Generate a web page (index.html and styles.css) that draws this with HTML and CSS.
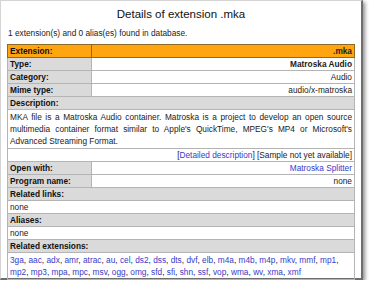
FILE: index.html
```html
<!DOCTYPE html>
<html lang="en">
  <head>
    <meta charset="utf-8" />
    <title>Details of extension .mka</title>
    <link rel="stylesheet" href="styles.css">
  </head>
  <body>
    <div class="page">
      <h1 class="title">Details of extension .mka</h1>
      <p class="found">1 extension(s) and 0 alias(es) found in database.</p>
      <table class="details">
        <tr class="head">
          <th>Extension:</th>
          <td class="val">.mka</td>
        </tr>
        <tr>
          <th>Type:</th>
          <td class="val strong">Matroska Audio</td>
        </tr>
        <tr>
          <th>Category:</th>
          <td class="val">Audio</td>
        </tr>
        <tr>
          <th>Mime type:</th>
          <td class="val">audio/x-matroska</td>
        </tr>
        <tr>
          <th colspan="2">Description:</th>
        </tr>
        <tr>
          <td colspan="2" class="text">MKA file is a Matroska Audio container. Matroska is a project to develop an open source multimedia container format similar to Apple's QuickTime, MPEG's MP4 or Microsoft's Advanced Streaming Format.</td>
        </tr>
        <tr>
          <td colspan="2" class="val">[<a href="#desc">Detailed description</a>] [Sample not yet available]</td>
        </tr>
        <tr>
          <th>Open with:</th>
          <td class="val"><a href="#splitter">Matroska Splitter</a></td>
        </tr>
        <tr>
          <th>Program name:</th>
          <td class="val">none</td>
        </tr>
        <tr>
          <th colspan="2">Related links:</th>
        </tr>
        <tr>
          <td colspan="2">none</td>
        </tr>
        <tr>
          <th colspan="2">Aliases:</th>
        </tr>
        <tr>
          <td colspan="2">none</td>
        </tr>
        <tr>
          <th colspan="2">Related extensions:</th>
        </tr>
        <tr>
          <td colspan="2" class="exts">
            <a href="#3ga">3ga</a>, <a href="#aac">aac</a>, <a href="#adx">adx</a>, <a href="#amr">amr</a>, <a href="#atrac">atrac</a>, <a href="#au">au</a>, <a href="#cel">cel</a>, <a href="#ds2">ds2</a>, <a href="#dss">dss</a>, <a href="#dts">dts</a>, <a href="#dvf">dvf</a>, <a href="#elb">elb</a>, <a href="#m4a">m4a</a>, <a href="#m4b">m4b</a>, <a href="#m4p">m4p</a>, <a href="#mkv">mkv</a>, <a href="#mmf">mmf</a>, <a href="#mp1">mp1</a>, <a href="#mp2">mp2</a>, <a href="#mp3">mp3</a>, <a href="#mpa">mpa</a>, <a href="#mpc">mpc</a>, <a href="#msv">msv</a>, <a href="#ogg">ogg</a>, <a href="#omg">omg</a>, <a href="#sfd">sfd</a>, <a href="#sfi">sfi</a>, <a href="#shn">shn</a>, <a href="#ssf">ssf</a>, <a href="#vop">vop</a>, <a href="#wma">wma</a>, <a href="#wv">wv</a>, <a href="#xma">xma</a>, <a href="#xmf">xmf</a>
          </td>
        </tr>
      </table>
    </div>
  </body>
</html>
```
FILE: styles.css
```css
body{
  margin:0;
  background:#fff;
  color:#222;
  font:8.3px/11px 'Liberation Sans',Arial,sans-serif;
}
*{box-sizing:border-box}
a{color:#3a3ac8;text-decoration:none}

.page{
  width:363px;
  height:280px;
  padding:0 6px;
  background:#fff;
  border:1px solid #d4d4d4;
  border-right:2px solid #6e6e6e;
  border-bottom:2px solid #6e6e6e;
  box-shadow:2px 2px 4px rgba(0,0,0,.45);
}
.title{
  margin:0;
  padding-top:8px;
  height:26px;
  text-align:center;
  font-size:11.5px;
  font-weight:normal;
  color:#111;
}
.found{
  margin:0 0 5px 1px;
  line-height:12px;
}

.details{
  width:100%;
  border-collapse:collapse;
  border:1px solid #9c9c9c;
}
.details th,
.details td{
  padding:0 2px;
  border:1px solid #b4b4b4;
  line-height:12px;
  height:13px;
  vertical-align:middle;
}
.details th{
  width:84px;
  text-align:left;
  font-weight:bold;
  background:#dadada;
  color:#111;
}
.details .head th,
.details .head td{
  background:#ffa510;
  border-color:#8c6a2a;
  font-weight:bold;
}
.details .val{
  text-align:right;
}
.details .strong{
  font-weight:bold;
}
.details .text{
  text-align:justify;
  padding:1px 2px;
}
.details .exts{
  padding:1px 2px;
}
```
